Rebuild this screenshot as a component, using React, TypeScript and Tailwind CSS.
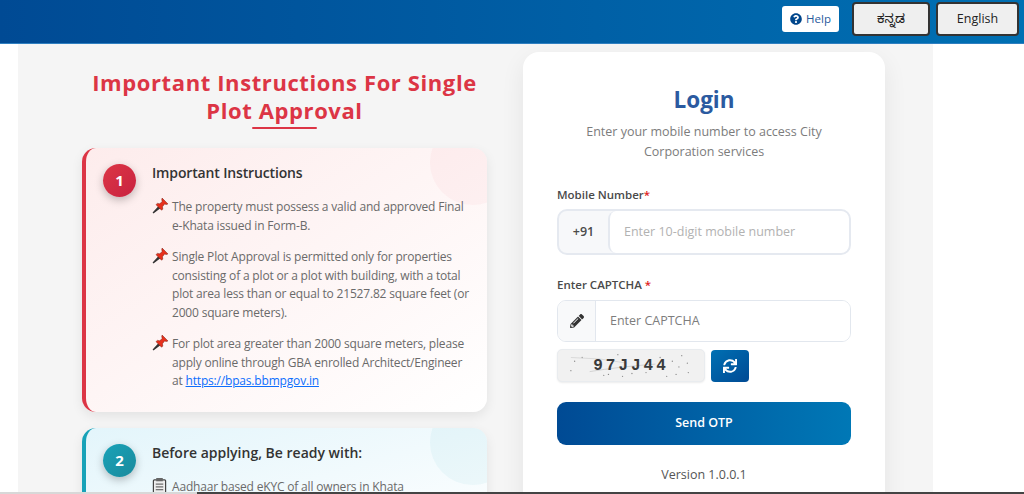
import React from 'react';
import { FaPencilAlt, FaQuestionCircle, FaSync } from 'react-icons/fa';

const font = { fontFamily: '"Open Sans", "Noto Sans", "Noto Sans Kannada", sans-serif' };

const Pin = () => (
  <svg viewBox="0 0 16 16" className="w-[17px] h-[17px] shrink-0 mt-[-1px]">
    <path d="M1 15 L6 9.5 L7 10.5 Z" fill="#444" stroke="#333" strokeWidth="1.2" />
    <path d="M9.5 1 L15 6.5 L13.6 7 L11.8 6.6 L9.8 9.2 L10.2 11.4 L9 12.4 L3.8 7.2 L5 6 L7.2 6.4 L9.6 4.4 L9.2 2.4 Z" fill="#e8301c" stroke="#7a2015" strokeWidth="0.5" />
  </svg>
);

const Clipboard = () => (
  <svg viewBox="0 0 16 17" className="w-[15px] h-[17px] shrink-0 mt-[-1px]" fill="none" stroke="#444" strokeWidth="1.3">
    <rect x="1.5" y="2.5" width="13" height="14" rx="1" fill="#eee" />
    <rect x="4.5" y="0.5" width="7" height="3.5" fill="#666" stroke="none" />
    <path d="M4 7h8M4 10h8M4 13h8" strokeWidth="1" />
  </svg>
);

const Bullet = ({ children }: { children: React.ReactNode }) => (
  <div className="flex gap-[3px]">
    <Pin />
    <p className="text-[12px] tracking-[-0.18px] leading-[18.5px] text-[#6a6a6a]">{children}</p>
  </div>
);

const Badge = ({ n, cls }: { n: number; cls: string }) => (
  <div className={`w-[33px] h-[33px] rounded-full shrink-0 flex items-center justify-center text-white font-bold text-[15px] shadow-[0_3px_8px_rgba(0,0,0,0.25)] ${cls}`}>
    {n}
  </div>
);

const dots = [
  [10, 22], [22, 8], [38, 20], [45, 27], [60, 5], [75, 25], [90, 24], [105, 8], [112, 28], [118, 12],
  [125, 18], [128, 6], [135, 24], [14, 12], [50, 26], [65, 28], [122, 26], [134, 14],
];

const Captcha = () => (
  <div className="relative w-[148px] h-[33px] rounded-[5px] bg-[#f1f1f1] border border-[#e9ecef] shadow-[0_1px_2px_rgba(0,0,0,0.08)] flex items-center justify-center overflow-hidden">
    <svg viewBox="0 0 148 33" className="absolute inset-0 w-full h-full">
      {dots.map(([x, y], i) => (
        <circle key={i} cx={x} cy={y} r="0.7" fill="#8a8a8a" />
      ))}
      <path d="M10 8 Q40 8 70 14" stroke="#ccc" strokeWidth="0.7" fill="none" />
      <path d="M30 23 Q60 18 100 15" stroke="#c8c8c8" strokeWidth="0.8" fill="none" />
    </svg>
    <span
      className="relative text-[16px] font-bold tracking-[3px] text-[#3a3a3a]"
      style={{ fontFamily: '"Liberation Mono", monospace' }}
    >
      97JJ44
    </span>
  </div>
);

export default function App() {
  return (
    <div className="w-[1024px] h-[494px] overflow-hidden bg-white flex flex-col" style={font}>
      <header className="h-[44px] shrink-0 flex items-start justify-end gap-[6px] pt-[2px] pr-[5px] bg-gradient-to-r from-[#004a94] to-[#0070b3] border-b border-[#2f7fc0]">
        <button className="w-[57px] h-[26px] mt-[4px] mr-[7px] bg-white rounded-[3px] flex items-center justify-center gap-[4px] text-[11.5px] text-[#285a9c]">
          <FaQuestionCircle className="w-[12px] h-[12px] text-[#00468c]" />
          Help
        </button>
        <button className="w-[78px] h-[34px] bg-[#efefef] rounded-[4px] border-2 border-[#333] text-[#222] text-[13px]">
          ಕನ್ನಡ
        </button>
        <button className="w-[83px] h-[34px] bg-[#efefef] rounded-[4px] border-2 border-[#333] text-[#222] text-[12.5px]">
          English
        </button>
      </header>

      <main className="w-[915px] ml-[18px] flex-1 min-h-0 bg-[#f5f5f5] flex overflow-hidden">
        <section className="w-[405px] ml-[64px] shrink-0">
          <div className="flex flex-col items-center pt-[24px]">
            <h1 className="w-[400px] text-center text-[22px] leading-[28px] tracking-[0.6px] font-bold text-[#dc3545]">
              Important Instructions For Single Plot Approval
            </h1>
            <div className="w-[65px] h-[2px] mt-[3px] rounded bg-[#dc3545]" />
          </div>

          <article className="relative overflow-hidden mt-[19px] h-[264px] rounded-[14px] border-l-4 border-[#dc3545] bg-gradient-to-br from-[#fdecec] to-white shadow-[0_4px_12px_rgba(0,0,0,0.08)] flex gap-[16px] pl-[17px] pt-[16px]">
            <div className="absolute right-[-28px] top-[-28px] w-[85px] h-[85px] rounded-full bg-[#dc3545]/4" />
            <Badge n={1} cls="bg-gradient-to-br from-[#dc3545] to-[#c82240]" />
            <div className="relative w-[320px]">
              <h2 className="text-[14px] leading-[18px] tracking-[-0.15px] font-semibold text-[#333]">Important Instructions</h2>
              <div className="mt-[16px] flex flex-col gap-[13px]">
                <Bullet>The property must possess a valid and approved Final e-Khata issued in Form-B.</Bullet>
                <Bullet>
                  Single Plot Approval is permitted only for properties consisting of a plot or a plot with building, with a total plot area less than or equal to 21527.82 square feet (or 2000 square meters).
                </Bullet>
                <Bullet>
                  For plot area greater than 2000 square meters, please apply online through GBA enrolled Architect/Engineer at{' '}
                  <a href="#" className="text-[#0d6efd] underline">https://bpas.bbmpgov.in</a>
                </Bullet>
              </div>
            </div>
          </article>

          <article className="relative overflow-hidden mt-[16px] h-[120px] rounded-[14px] border-l-4 border-[#17a2b8] bg-gradient-to-br from-[#e3f5fb] to-white shadow-[0_4px_12px_rgba(0,0,0,0.08)] flex gap-[16px] pl-[17px] pt-[16px]">
            <div className="absolute right-[-28px] top-[-28px] w-[85px] h-[85px] rounded-full bg-[#17a2b8]/5" />
            <Badge n={2} cls="bg-gradient-to-br from-[#17a2b8] to-[#1b8a9c]" />
            <div className="relative w-[320px]">
              <h2 className="text-[14px] leading-[18px] font-semibold text-[#333]">Before applying, Be ready with:</h2>
              <div className="mt-[16px] flex gap-[5px]">
                <Clipboard />
                <p className="text-[12px] tracking-[-0.18px] leading-[18.5px] text-[#6a6a6a]">Aadhaar based eKYC of all owners in Khata</p>
              </div>
            </div>
          </article>
        </section>

        <section className="w-[362px] ml-[36px] mt-[8px] shrink-0 bg-white rounded-t-[16px] shadow-[0_8px_24px_rgba(0,0,0,0.07)] px-[34px] pt-[34px] h-[480px]">
          <h2 className="text-center text-[22.5px] leading-[28px] font-bold text-[#2b5aa0]">Login</h2>
          <p className="mt-[8px] mx-auto w-[260px] text-center text-[12.5px] leading-[20px] text-[#7c7c7c]">
            Enter your mobile number to access City Corporation services
          </p>

          <label className="block mt-[25px] text-[11.5px] leading-[16px] font-semibold text-[#4a4a4a]">
            Mobile Number<span className="text-[#e02020]">*</span>
          </label>
          <div className="mt-[6px] h-[46px] flex rounded-[10px] border-2 border-[#e5e9f0] bg-[#f7f8fa] overflow-hidden">
            <div className="w-[49px] shrink-0 flex items-center justify-center text-[12.5px] font-semibold text-[#4a4a4a]">+91</div>
            <input
              placeholder="Enter 10-digit mobile number"
              className="flex-1 min-w-0 bg-white rounded-[8px] border-l-2 border-[#e5e9f0] px-[14px] text-[12.5px] outline-none placeholder:text-[#b2b2b2]"
            />
          </div>

          <label className="block mt-[22px] text-[11.5px] leading-[16px] font-semibold text-[#4a4a4a]">
            Enter CAPTCHA <span className="text-[#e02020]">*</span>
          </label>
          <div className="mt-[7px] h-[42px] flex rounded-[9px] border border-[#e2e7ee] overflow-hidden">
            <div className="w-[38px] shrink-0 flex items-center justify-center bg-[#f8f9fa] border-r border-[#e2e7ee]">
              <FaPencilAlt className="w-[14px] h-[14px] text-[#333]" />
            </div>
            <input
              placeholder="Enter CAPTCHA"
              className="flex-1 min-w-0 bg-white px-[14px] text-[12.5px] outline-none placeholder:text-[#7d7d7d]"
            />
          </div>
          <div className="mt-[7px] flex items-center gap-[6px]">
            <Captcha />
            <button className="w-[38px] h-[32px] rounded-[4px] bg-gradient-to-br from-[#0070b3] to-[#004a94] flex items-center justify-center">
              <FaSync className="w-[14px] h-[14px] text-white" />
            </button>
          </div>

          <button className="mt-[20px] w-full h-[43px] rounded-[9px] bg-gradient-to-r from-[#004a94] to-[#0078b6] text-white text-[12.5px] font-semibold">
            Send OTP
          </button>
          <p className="mt-[21px] text-center text-[12.5px] leading-[18px] text-[#555]">Version 1.0.0.1</p>
        </section>
      </main>

      <div className="h-[2px] shrink-0 flex">
        <div className="w-[197px] bg-[#d8d8d8]" />
        <div className="flex-1 bg-[#444]" />
      </div>
    </div>
  );
}
